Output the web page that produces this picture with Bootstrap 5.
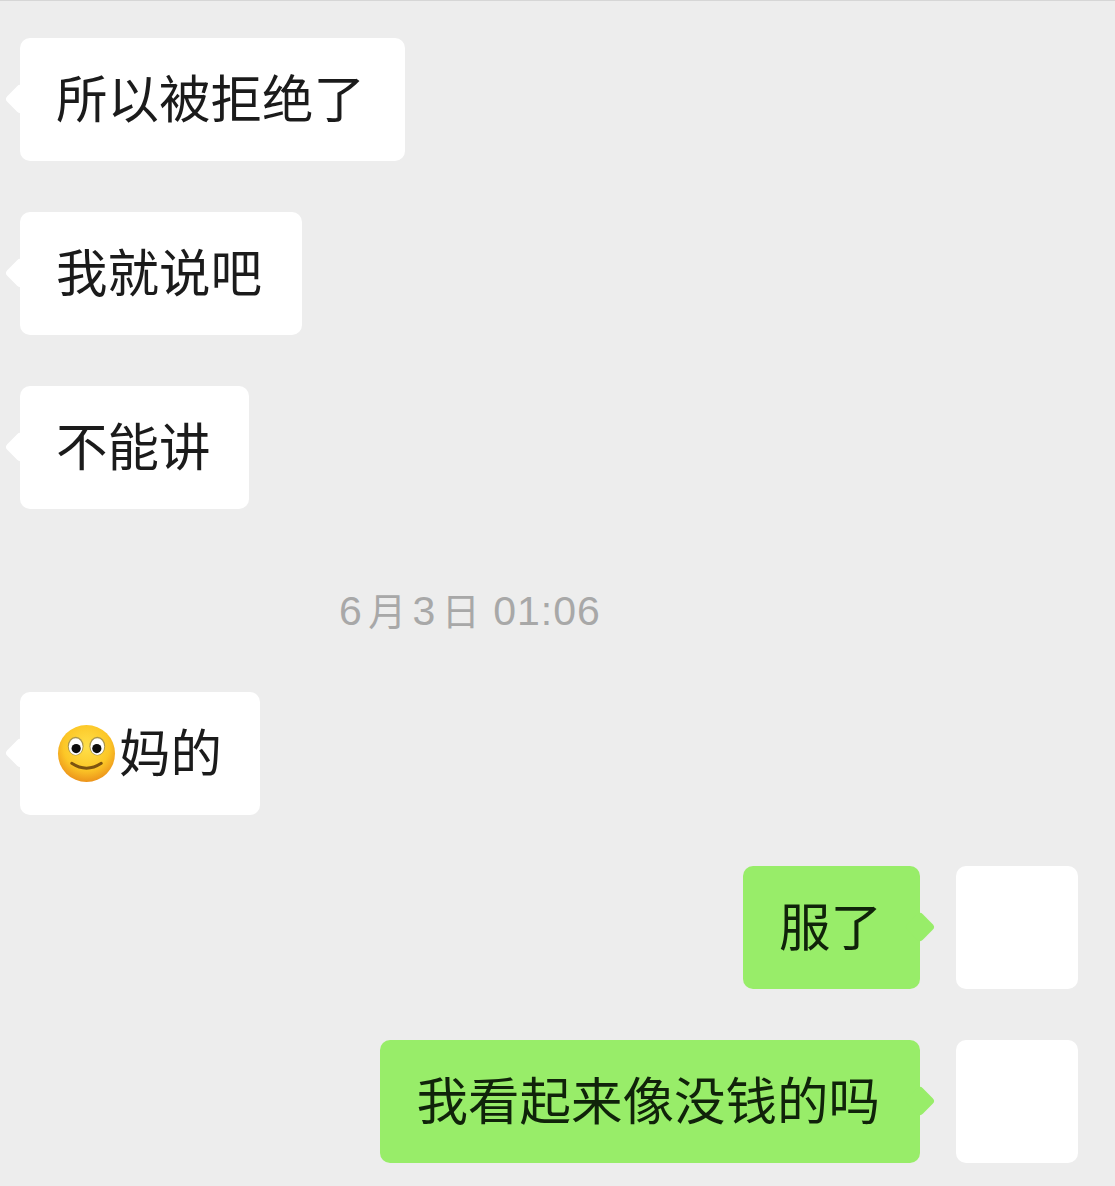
<!DOCTYPE html>
<html lang="zh-CN">
<head>
  <meta charset="UTF-8">
  <title>聊天记录</title>
  <meta name="viewport" content="width=device-width, initial-scale=1">
  <link href="https://cdn.jsdelivr.net/npm/bootstrap@5.3.0/dist/css/bootstrap.min.css" rel="stylesheet">
  <style>
    body {
      background: #ededed;
      border-top: 1px solid #d6d6d6;
      font-family: "Noto Sans CJK SC", "Liberation Sans", sans-serif;
      overflow: hidden;
    }
    .chat-list {
      padding: 37px 37px 23px 20px;
      gap: 51px;
    }
    .chat-bubble {
      height: 123px;
      padding: 0 40px 8px 36px;
      border-radius: 10px;
      font-size: 51.5px;
      line-height: 1;
      color: #1b1b1b;
      white-space: nowrap;
    }
    .chat-bubble.is-short { padding-right: 38px; }
    /* little diamond on the side of a bubble */
    .chat-bubble::after {
      content: "";
      position: absolute;
      top: 50%;
      width: 22px;
      height: 22px;
      margin-top: -12px;
      background: inherit;
      border-radius: 4px;
      transform: rotate(45deg);
    }
    .from-them { background: #fff; }
    .from-them::after { left: -11px; }
    .from-me { background: #98ed69; color: #10230a; }
    .from-me::after { right: -11px; }
    .chat-avatar {
      width: 122px;
      height: 123px;
      margin-left: 36px;
      border-radius: 10px;
      background: #fff;
    }
    .chat-time {
      height: 50px;
      margin: 26px 0 5px 319px;
      font-family: "Liberation Sans", "Noto Sans CJK SC", sans-serif;
      font-size: 41px;
      line-height: 50px;
      letter-spacing: 1px;
      color: #a8a8a8;
    }
    .chat-date { word-spacing: -7px; }
    .chat-date b { font-size: 38px; font-weight: 400; }
    .chat-emoji {
      width: 59px;
      height: 59px;
      margin: 8px 3px 0 1px;
    }
  </style>
</head>
<body>

  <div class="chat-list d-flex flex-column">
    <div class="d-flex">
      <div class="chat-bubble from-them position-relative d-flex align-items-center">所以被拒绝了</div>
    </div>
    <div class="d-flex">
      <div class="chat-bubble from-them position-relative d-flex align-items-center">我就说吧</div>
    </div>
    <div class="d-flex">
      <div class="chat-bubble is-short from-them position-relative d-flex align-items-center">不能讲</div>
    </div>

    <div class="chat-time"><span class="chat-date">6 <b>月</b> 3 <b>日</b></span> 01:06</div>

    <div class="d-flex">
      <div class="chat-bubble is-short from-them position-relative d-flex align-items-center">
        <svg class="chat-emoji" viewBox="0 0 60 60" aria-hidden="true">
          <defs>
            <radialGradient id="faceFill" cx="50%" cy="38%" r="62%">
              <stop offset="0" stop-color="#ffe04a"/>
              <stop offset="0.65" stop-color="#fcc727"/>
              <stop offset="1" stop-color="#ec931b"/>
            </radialGradient>
          </defs>
          <circle cx="30" cy="30" r="29" fill="url(#faceFill)"/>
          <ellipse cx="19" cy="22.5" rx="8" ry="9.5" fill="#a8944c"/>
          <ellipse cx="41" cy="22.5" rx="8" ry="9.5" fill="#a8944c"/>
          <ellipse cx="19" cy="23" rx="7" ry="8.5" fill="#fff"/>
          <ellipse cx="41" cy="23" rx="7" ry="8.5" fill="#fff"/>
          <circle cx="19.5" cy="25" r="4.7" fill="#0d0d0d"/>
          <circle cx="40.5" cy="25" r="4.7" fill="#0d0d0d"/>
          <path d="M15 40q15 10 30 0" fill="none" stroke="#7d5310" stroke-width="3" stroke-linecap="round"/>
        </svg>妈的
      </div>
    </div>

    <div class="d-flex justify-content-end">
      <div class="chat-bubble is-short from-me position-relative d-flex align-items-center">服了</div>
      <div class="chat-avatar"></div>
    </div>
    <div class="d-flex justify-content-end">
      <div class="chat-bubble from-me position-relative d-flex align-items-center">我看起来像没钱的吗</div>
      <div class="chat-avatar"></div>
    </div>
  </div>

  <script src="https://cdn.jsdelivr.net/npm/bootstrap@5.3.0/dist/js/bootstrap.bundle.min.js"></script>
</body>
</html>
